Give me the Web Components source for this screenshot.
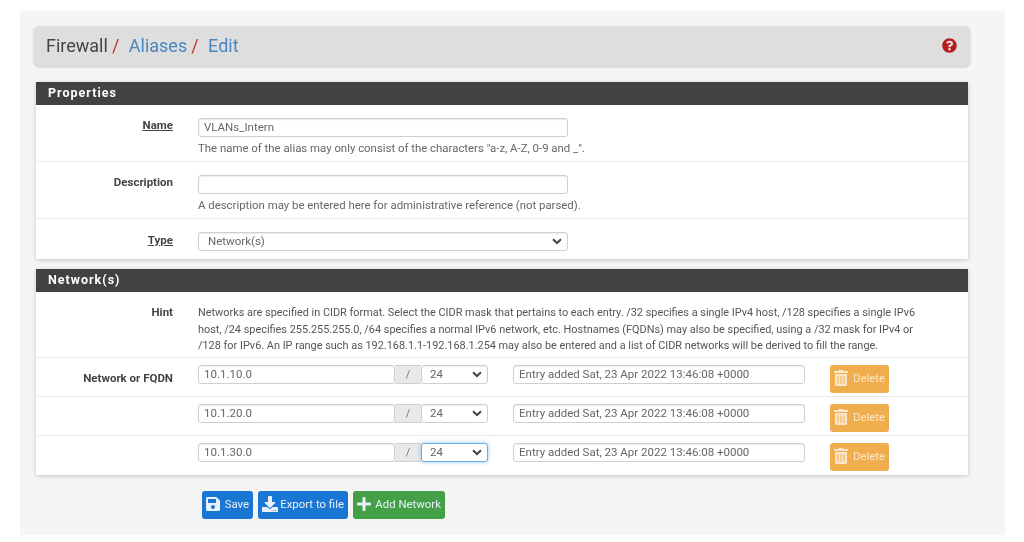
<!DOCTYPE html>
<html>
<head>
<meta charset="utf-8">
<title>Firewall / Aliases / Edit</title>
<style>
  html,body{margin:0;background:#fff;}
  body{font-family:Roboto,"Liberation Sans",sans-serif;font-size:11.4px;color:#555;}
</style>
</head>
<body>

<fw-page>
  <fw-breadcrumb></fw-breadcrumb>

  <fw-panel heading="Properties">
    <fw-row label="Name" underline top="13" bottom="5">
      <fw-field width="370">VLANs_Intern</fw-field>
      <fw-help>The name of the alias may only consist of the characters "a-z, A-Z, 0-9 and _".</fw-help>
    </fw-row>
    <fw-row label="Description" top="13" bottom="5">
      <fw-field width="370"></fw-field>
      <fw-help>A description may be entered here for administrative reference (not parsed).</fw-help>
    </fw-row>
    <fw-row label="Type" underline drop="1" top="13" bottom="8" last>
      <fw-select width="370" pad="9">Network(s)</fw-select>
    </fw-row>
  </fw-panel>

  <fw-panel heading="Network(s)" style="margin-top:10px">
    <fw-row label="Hint" top="13" bottom="2">
      <fw-hint>Networks are specified in CIDR format. Select the CIDR mask that pertains to each entry. /32 specifies a single IPv4 host, /128 specifies a single IPv6 host, /24 specifies 255.255.255.0, /64 specifies a normal IPv6 network, etc. Hostnames (FQDNs) may also be specified, using a /32 mask for IPv4 or /128 for IPv6. An IP range such as 192.168.1.1-192.168.1.254 may also be entered and a list of CIDR networks will be derived to fill the range.</fw-hint>
    </fw-row>
    <fw-row label="Network or FQDN" drop="6" top="7" bottom="3">
      <fw-network address="10.1.10.0" mask="24" note="Entry added Sat, 23 Apr 2022 13:46:08 +0000"></fw-network>
    </fw-row>
    <fw-row top="7" bottom="3">
      <fw-network address="10.1.20.0" mask="24" note="Entry added Sat, 23 Apr 2022 13:46:08 +0000"></fw-network>
    </fw-row>
    <fw-row top="7" bottom="4" last>
      <fw-network address="10.1.30.0" mask="24" focused note="Entry added Sat, 23 Apr 2022 13:46:08 +0000"></fw-network>
    </fw-row>
  </fw-panel>

  <fw-actions>
    <fw-button icon="save" color="#1976d2" width="51">Save</fw-button>
    <fw-button icon="download" color="#1976d2" width="90">Export to file</fw-button>
    <fw-button icon="plus" color="#43a047" width="92">Add Network</fw-button>
  </fw-actions>
</fw-page>

<script>
const ICONS = {
  save: ['0 0 448 512','M433.941 129.941l-83.882-83.882A48 48 0 0 0 316.118 32H48C21.49 32 0 53.49 0 80v352c0 26.51 21.49 48 48 48h352c26.51 0 48-21.49 48-48V163.882a48 48 0 0 0-14.059-33.941zM224 416c-35.346 0-64-28.654-64-64 0-35.346 28.654-64 64-64s64 28.654 64 64c0 35.346-28.654 64-64 64zm96-304.52V212c0 6.627-5.373 12-12 12H76c-6.627 0-12-5.373-12-12V108c0-6.627 5.373-12 12-12h228.52c3.183 0 6.235 1.264 8.485 3.515l3.48 3.48A11.996 11.996 0 0 1 320 111.48z'],
  download: ['0 0 512 512','M216 0h80c13.3 0 24 10.7 24 24v168h87.7c17.8 0 26.7 21.5 14.1 34.1L269.7 378.3c-7.5 7.5-19.8 7.5-27.3 0L90.1 226.1c-12.6-12.6-3.7-34.1 14.1-34.1H192V24c0-13.3 10.7-24 24-24zm296 376v112c0 13.3-10.7 24-24 24H24c-13.3 0-24-10.7-24-24V376c0-13.3 10.7-24 24-24h146.7l49 49c20.1 20.1 52.5 20.1 72.6 0l49-49H488c13.3 0 24 10.7 24 24zm-124 88c0-11-9-20-20-20s-20 9-20 20 9 20 20 20 20-9 20-20zm64 0c0-11-9-20-20-20s-20 9-20 20 9 20 20 20 20-9 20-20z'],
  plus: ['0 0 448 512','M416 208H272V64c0-17.67-14.33-32-32-32h-32c-17.67 0-32 14.33-32 32v144H32c-17.67 0-32 14.33-32 32v32c0 17.67 14.33 32 32 32h144v144c0 17.67 14.33 32 32 32h32c17.67 0 32-14.33 32-32V304h144c17.67 0 32-14.33 32-32v-32c0-17.67-14.33-32-32-32z'],
  trash: ['0 0 448 512','M32 464a48 48 0 0 0 48 48h288a48 48 0 0 0 48-48V128H32zm272-256a16 16 0 0 1 32 0v224a16 16 0 0 1-32 0zm-96 0a16 16 0 0 1 32 0v224a16 16 0 0 1-32 0zm-96 0a16 16 0 0 1 32 0v224a16 16 0 0 1-32 0zM432 32H312l-9.4-18.7A24 24 0 0 0 281.1 0H166.8a23.72 23.72 0 0 0-21.4 13.3L136 32H16A16 16 0 0 0 0 48v32a16 16 0 0 0 16 16h416a16 16 0 0 0 16-16V48a16 16 0 0 0-16-16z'],
  help: ['0 0 512 512','M504 256c0 136.997-111.043 248-248 248S8 392.997 8 256C8 119.083 119.043 8 256 8s248 111.083 248 248zM262.655 90c-54.497 0-89.255 22.957-116.549 63.758-3.536 5.286-2.353 12.415 2.715 16.258l34.699 26.31c5.205 3.947 12.621 3.008 16.665-2.122 17.864-22.658 30.113-35.797 57.303-35.797 20.429 0 45.698 13.148 45.698 32.958 0 14.976-12.363 22.667-32.534 33.976C247.128 238.528 216 254.941 216 296v4c0 6.627 5.373 12 12 12h56c6.627 0 12-5.373 12-12v-1.333c0-28.462 83.186-29.647 83.186-106.667 0-58.002-60.165-102-116.531-102zM256 338c-25.365 0-46 20.635-46 46 0 25.364 20.635 46 46 46s46-20.636 46-46c0-25.365-20.635-46-46-46z']
};
function icon(name, size, color){
  const [box, d] = ICONS[name];
  return `<svg viewBox="${box}" height="${size}" style="display:block;flex:none" fill="${color}"><path d="${d}"/></svg>`;
}
const fieldBox = `box-sizing:border-box;height:19px;border:1px solid #cfcfcf;border-radius:3px;background:#fff;
  box-shadow:inset 0 1px 1px rgba(0,0,0,.08);color:#666;font-size:11.5px;line-height:17px;white-space:nowrap;`;

class FwPage extends HTMLElement{
  connectedCallback(){
    this.attachShadow({mode:'open'}).innerHTML = `
    <style>
      :host{display:block;box-sizing:border-box;height:524px;margin:11px 19px 7px 20px;
        padding:15px 37px 0 16px;background:#f5f5f5;filter:blur(.35px);}
    </style>
    <slot></slot>`;
  }
}
customElements.define('fw-page',FwPage);

class FwBreadcrumb extends HTMLElement{
  connectedCallback(){
    this.attachShadow({mode:'open'}).innerHTML = `
    <style>
      :host{display:flex;align-items:center;justify-content:space-between;height:40px;margin:0 -2px 16px;
        padding:0 13px 2px 12px;box-sizing:border-box;background:#dedede;border-radius:5px;
        box-shadow:0 1px 3px rgba(0,0,0,.2);font-size:18px;color:#444;}
      a{color:#4a86bf;text-decoration:none;}
      i{color:#c0392b;font-style:normal;margin:0 5px 0 4px;}
      .crumbs{display:flex;white-space:pre;}
    </style>
    <div class="crumbs"><span>Firewall</span><i>/</i><a> Aliases</a><i>/</i><a> Edit</a></div>
    ${icon('help',15,'#b71c1c')}`;
  }
}
customElements.define('fw-breadcrumb',FwBreadcrumb);

class FwPanel extends HTMLElement{
  connectedCallback(){
    this.attachShadow({mode:'open'}).innerHTML = `
    <style>
      :host{display:block;background:#fff;box-shadow:0 1px 4px rgba(0,0,0,.2);}
      h2{margin:0;height:23px;box-sizing:border-box;padding:0 12px;background:#424242;color:#fff;
        font:700 12.5px/21px Roboto,sans-serif;letter-spacing:1px;}
    </style>
    <h2>${this.getAttribute('heading')}</h2>
    <slot></slot>`;
  }
}
customElements.define('fw-panel',FwPanel);

class FwRow extends HTMLElement{
  connectedCallback(){
    const label = this.getAttribute('label') || '';
    const drop = this.getAttribute('drop') || 0;
    this.attachShadow({mode:'open'}).innerHTML = `
    <style>
      :host{display:grid;grid-template-columns:137px 1fr;column-gap:25px;box-sizing:border-box;
        padding:${this.getAttribute('top')}px 0 ${this.getAttribute('bottom')}px;
        border-bottom:${this.hasAttribute('last') ? '0' : '1px solid #ebebeb'};}
      label{margin-top:${drop}px;text-align:right;font-weight:700;font-size:11.5px;line-height:15px;color:#444;white-space:nowrap;}
      label.u span{text-decoration:underline;}
      .body{display:flex;flex-direction:column;align-items:flex-start;}
    </style>
    <label class="${this.hasAttribute('underline') ? 'u' : ''}"><span>${label}</span></label>
    <div class="body"><slot></slot></div>`;
  }
}
customElements.define('fw-row',FwRow);

class FwField extends HTMLElement{
  connectedCallback(){
    this.attachShadow({mode:'open'}).innerHTML = `
    <style>
      :host{display:block;${fieldBox}width:${this.getAttribute('width')}px;padding:0 5px;}
    </style>
    <slot></slot>`;
  }
}
customElements.define('fw-field',FwField);

class FwSelect extends HTMLElement{
  connectedCallback(){
    const pad = this.getAttribute('pad') || 8;
    const focused = this.hasAttribute('focused');
    this.attachShadow({mode:'open'}).innerHTML = `
    <style>
      :host{display:flex;align-items:center;justify-content:space-between;${fieldBox}
        width:${this.getAttribute('width')}px;padding:0 5px 0 ${pad}px;
        ${focused ? 'border-color:#66afe9;box-shadow:0 0 4px rgba(102,175,233,.7);' : ''}}
    </style>
    <slot></slot>
    <svg width="10" height="7" viewBox="0 0 10 7" fill="none" stroke="#444" stroke-width="2"><path d="M1 1.2 5 5l4-3.8"/></svg>`;
  }
}
customElements.define('fw-select',FwSelect);

class FwHelp extends HTMLElement{
  connectedCallback(){
    this.attachShadow({mode:'open'}).innerHTML = `
    <style>:host{display:block;margin-top:3px;color:#666;font-size:11.4px;line-height:16px;white-space:nowrap;}</style>
    <slot></slot>`;
  }
}
customElements.define('fw-help',FwHelp);

class FwHint extends HTMLElement{
  connectedCallback(){
    this.attachShadow({mode:'open'}).innerHTML = `
    <style>:host{display:block;width:724px;color:#555;font-size:10.9px;line-height:16.5px;}</style>
    <slot></slot>`;
  }
}
customElements.define('fw-hint',FwHint);

class FwNetwork extends HTMLElement{
  connectedCallback(){
    const a = n => this.getAttribute(n);
    this.attachShadow({mode:'open'}).innerHTML = `
    <style>
      :host{display:flex;align-items:flex-start;}
      .slash{box-sizing:border-box;width:26px;height:19px;background:#e9e9e9;border:solid #cfcfcf;border-width:1px 0;
        text-align:center;color:#777;font-size:11px;line-height:17px;}
      .note{margin-left:25px;}
      fw-button{margin-left:25px;}
    </style>
    <fw-field width="197">${a('address')}</fw-field>
    <div class="slash">/</div>
    <fw-select width="67" ${this.hasAttribute('focused') ? 'focused' : ''}>${a('mask')}</fw-select>
    <fw-field class="note" width="292">${a('note')}</fw-field>
    <fw-button icon="trash" color="#f0ad4e" text="#fbe6c8" width="59">Delete</fw-button>`;
  }
}
customElements.define('fw-network',FwNetwork);

class FwActions extends HTMLElement{
  connectedCallback(){
    this.attachShadow({mode:'open'}).innerHTML = `
    <style>:host{display:flex;gap:5px;margin:16px 0 0 166px;}</style>
    <slot></slot>`;
  }
}
customElements.define('fw-actions',FwActions);

class FwButton extends HTMLElement{
  connectedCallback(){
    const text = this.getAttribute('text') || '#e8f1fb';
    this.attachShadow({mode:'open'}).innerHTML = `
    <style>
      :host{display:inline-flex;align-items:center;justify-content:space-between;box-sizing:border-box;height:28px;
        width:${this.getAttribute('width')}px;padding:0 4px 1px;
        background:${this.getAttribute('color')};border-radius:3px;color:${text};font-size:11.4px;white-space:nowrap;}
    </style>
    ${icon(this.getAttribute('icon'),16,text)}
    <slot></slot>`;
  }
}
customElements.define('fw-button',FwButton);
</script>
</body>
</html>
